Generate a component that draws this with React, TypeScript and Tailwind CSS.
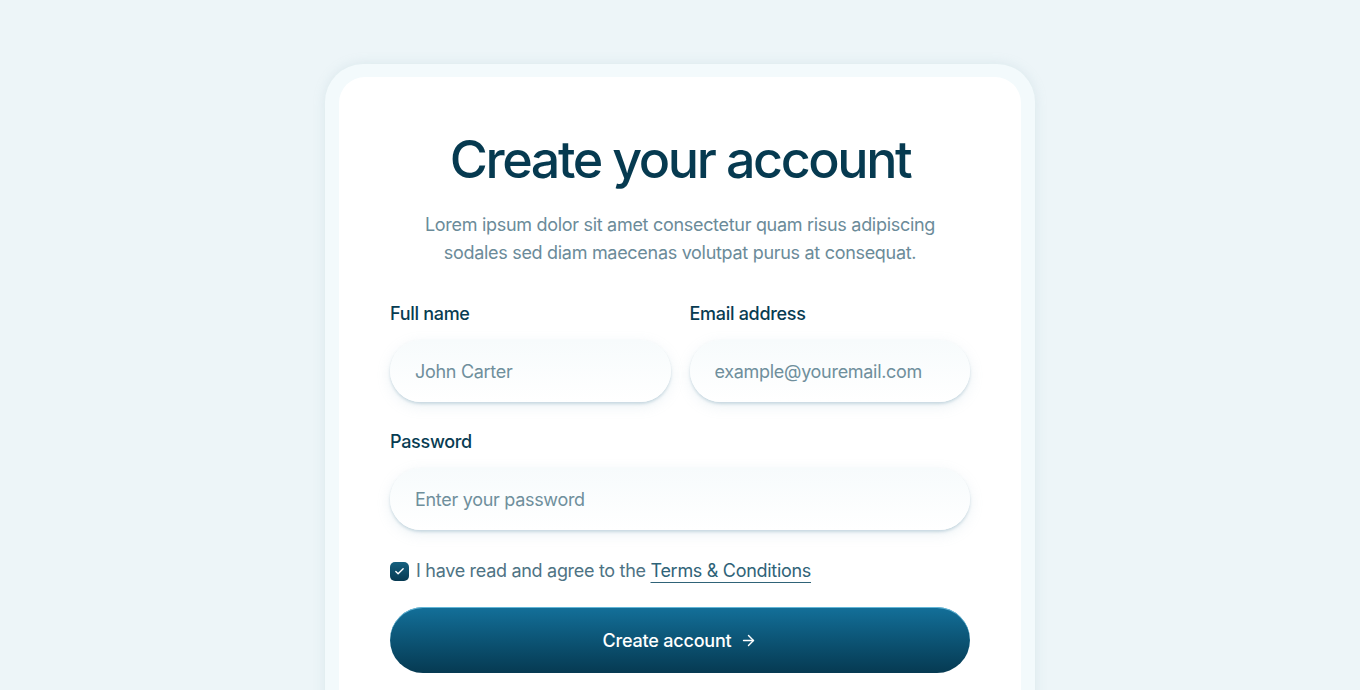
import { ArrowRight, Check } from 'lucide-react';

const fieldClass =
  'h-[62px] w-full rounded-full bg-gradient-to-b from-[#f7fbfc] to-white px-[25px] text-[18px] tracking-[-0.3px] text-[#0b3a4f] placeholder:text-[#6f8f9c] outline-none shadow-[0_2px_3px_rgba(120,160,180,0.35),0_4px_14px_rgba(150,185,200,0.18)]';

const Field = ({ label, placeholder, type = 'text' }: { label: string; placeholder: string; type?: string }) => (
  <label className="flex flex-col gap-[13px]">
    <span className="text-[18px] font-medium leading-[26px] text-[#083c52] tracking-[-0.3px]">{label}</span>
    <input type={type} placeholder={placeholder} className={fieldClass} />
  </label>
);

export default function App() {
  return (
    <div
      className="min-h-screen h-[690px] overflow-hidden bg-[#edf5f8] pt-[64px]"
      style={{ fontFamily: 'Inter, "Noto Sans", sans-serif' }}
    >
      <div className="mx-auto w-[710px] rounded-t-[38px] bg-[#f3fafc] px-[14px] pt-[13px] shadow-[0_0_12px_rgba(160,190,205,0.25)]">
        <div className="rounded-t-[26px] bg-white px-[51px] pt-[52px] pb-10">
          <h1 className="text-center text-[52px] font-medium leading-[62px] tracking-[-2.4px] text-[#063a50]">
            Create your account
          </h1>
          <p className="mx-auto mt-[20px] max-w-[530px] text-center text-[18px] leading-[28px] tracking-[-0.3px] text-[#6b8b99]">
            Lorem ipsum dolor sit amet consectetur quam risus adipiscing sodales sed diam maecenas volutpat purus at consequat.
          </p>

          <form className="mt-[34px] flex flex-col" onSubmit={(e) => e.preventDefault()}>
            <div className="grid grid-cols-2 gap-[19px]">
              <Field label="Full name" placeholder="John Carter" />
              <Field label="Email address" placeholder="example@youremail.com" type="email" />
            </div>
            <div className="mt-[27px]">
              <Field label="Password" placeholder="Enter your password" type="password" />
            </div>

            <label className="mt-[29px] flex items-center gap-[7px] text-[18px] leading-[24px] tracking-[-0.3px] text-[#4e7384]">
              <span className="flex h-[19px] w-[19px] items-center justify-center rounded-[5px] bg-gradient-to-b from-[#15607f] to-[#073a52]">
                <Check size={11} strokeWidth={3} className="text-white" />
              </span>
              <span>
                I have read and agree to the{' '}
                <a className="underline decoration-[1px] underline-offset-[5px] text-[#2f6378]">Terms &amp; Conditions</a>
              </span>
            </label>

            <button
              type="submit"
              className="mt-[24px] flex h-[66px] w-full items-center justify-center gap-[9px] rounded-full bg-gradient-to-b from-[#13709a] to-[#063a52] text-[18px] font-medium tracking-[-0.2px] text-white shadow-[inset_0_1px_0_rgba(120,200,230,0.8)]"
            >
              Create account
              <ArrowRight size={17} strokeWidth={2} />
            </button>
          </form>
        </div>
      </div>
    </div>
  );
}
